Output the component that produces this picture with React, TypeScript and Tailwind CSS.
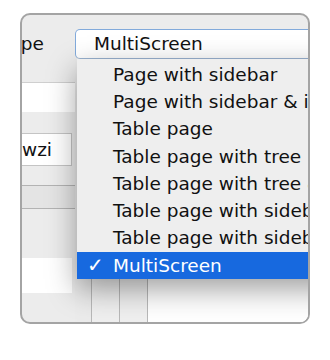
const items = [
  "Page with sidebar",
  "Page with sidebar & icons",
  "Table page",
  "Table page with tree",
  "Table page with tree & sidebar",
  "Table page with sidebar",
  "Table page with sidebar & tree",
  "MultiScreen",
];

const App = () => {
  const selected = "MultiScreen";

  return (
    <div
      className="w-[330px] h-[360px] bg-white pt-[13px] pl-[20px] text-[#111]"
      style={{ fontFamily: '"DejaVu Sans", sans-serif' }}
    >
      <div className="relative w-[290px] h-[311px] border-2 border-[#a4a4a4] rounded-[10px] bg-[#ececec] overflow-hidden flex flex-col">
        {/* Header row */}
        <div className="flex items-end pt-[14px] h-[44px] shrink-0">
          <div className="w-[53px] shrink-0 h-[30px] overflow-hidden flex justify-end items-center pr-[31px] whitespace-nowrap text-[18.5px]">
            Type
          </div>
          <div className="w-[270px] shrink-0 h-[30px] bg-white border border-[#82aadb] border-b-[#9bb4d2] rounded-l-[5px] flex items-center pl-[18px] text-[18.5px] whitespace-nowrap">
            MultiScreen
          </div>
        </div>

        {/* Body */}
        <div className="flex flex-1">
          <div className="w-[53px] shrink-0 flex flex-col">
            <div className="h-[23px]" />
            <div className="h-[30px] bg-white border-t border-[#cfcfcf]" />
            <div className="h-[21px]" />
            <div className="h-[33px] w-[50px] bg-white border border-l-0 border-[#c4c4c4] flex items-center text-[18.5px] whitespace-nowrap">
              wzi
            </div>
            <div className="h-[19px]" />
            <div className="h-[24px] bg-[#e4e4e4] border-y border-[#b3b3b3]" />
            <div className="h-[49px]" />
            <div className="h-[35px] w-[50px] bg-white" />
            <div className="flex-1" />
          </div>
          <div className="flex-1 flex bg-white">
            <div className="w-[17px] bg-[#ebebeb] border-r border-[#b8b8b8]" />
            <div className="w-[28px] bg-[#efefef] border-r border-[#b8b8b8]" />
            <div className="w-[28px] bg-[#efefef] border-r border-[#b8b8b8]" />
            <div className="flex-1 bg-white" />
          </div>
        </div>

        {/* Dropdown menu */}
        <div className="absolute left-[55px] top-[44px] w-[270px] bg-[#eeeeee] pt-[2px] shadow-[0_10px_28px_rgba(0,0,0,0.38)]">
          {items.map((item) => {
            const active = item === selected;
            return (
              <div
                key={item}
                className={`h-[27.25px] flex items-center text-[18.5px] whitespace-nowrap ${
                  active ? "bg-[#1769df] text-white" : "text-[#111]"
                }`}
              >
                <span className="w-[36px] pl-[10px] shrink-0 text-[20px]">
                  {active ? "✓" : ""}
                </span>
                {item}
              </div>
            );
          })}
        </div>
      </div>
    </div>
  );
};

export default App;
